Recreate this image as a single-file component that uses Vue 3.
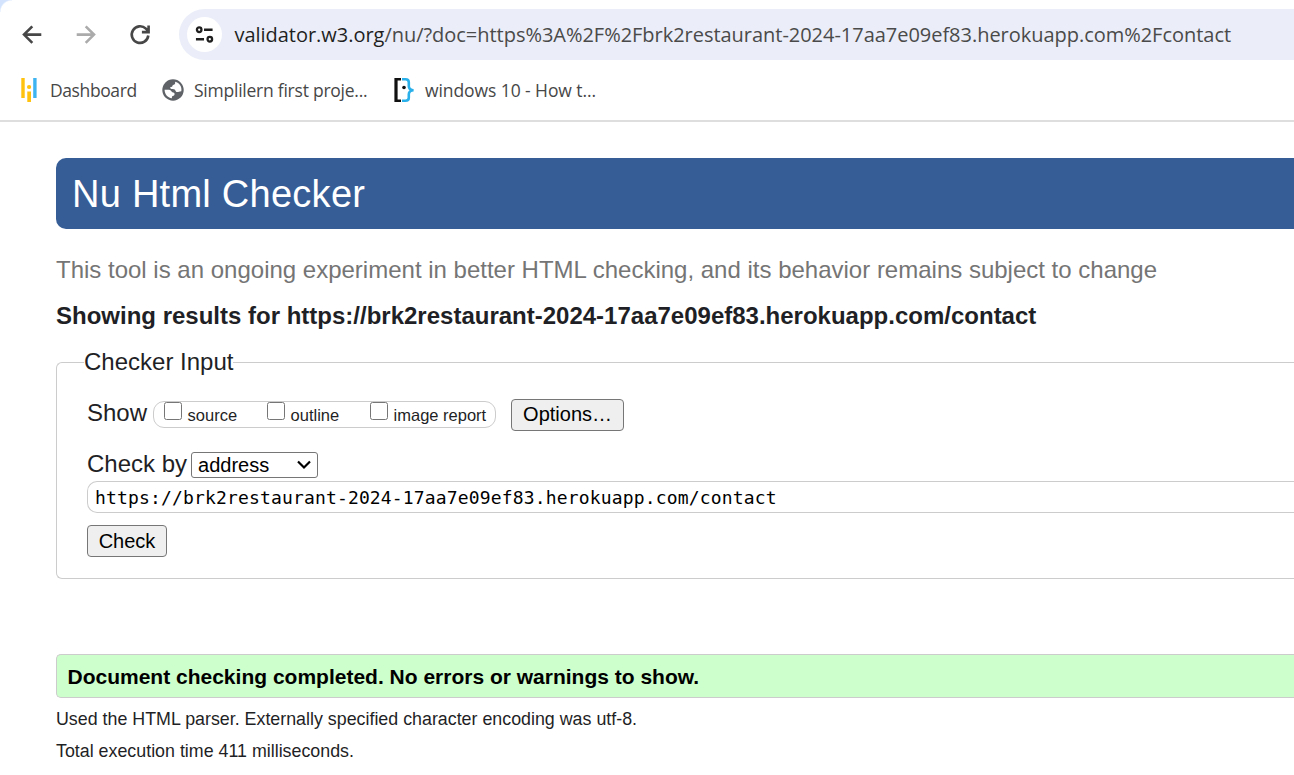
<script setup>
const options = ['source', 'outline', 'image report']
</script>

<template>
  <div class="window">
    <header class="chrome">
      <div class="toolbar">
        <svg class="nav" viewBox="0 0 24 24"><path d="M21.300 11.600H4.300M12.300 3.300 4 11.600l8.300 8.300" /></svg>
        <svg class="nav forward" viewBox="0 0 24 24"><path d="M2.700 11.600h17M11.700 3.300l8.300 8.300-8.300 8.300" /></svg>
        <svg class="nav reload" viewBox="0 0 24 24"><path d="M20.300 12.500a8.300 8.300 0 1 1-2.400-6.800l2.300 2.400M20.600 2.400v6.700h-6.700" /></svg>
        <div class="omnibox">
          <span class="site-info">
            <svg viewBox="0 0 20 20"><circle cx="4.4" cy="5" r="2.4" /><path d="M9.5 5h9M1 15h8.5" /><circle cx="15.6" cy="15" r="2.4" /></svg>
          </span>
          <span class="url"><b>validator.w3.org</b>/nu/?doc=https%3A%2F%2Fbrk2restaurant-2024-17aa7e09ef83.herokuapp.com%2Fcontact</span>
        </div>
      </div>
      <nav class="bookmarks">
        <a class="mark m1"><svg viewBox="0 0 18 24" width="18" height="24"><path fill="#ffc20e" d="M1.300 0h3.400v20H1.300zM7.300 13.500h3.700V24H7.300z" /><circle cx="9.100" cy="9" r="2.100" fill="#ffc20e" /><path fill="#3eb4f0" d="M13.200 0h3.400v20h-3.400z" /></svg><span>Dashboard</span></a>
        <a class="mark m2"><svg viewBox="0 0 22 22" width="22" height="22"><circle cx="11" cy="11" r="10.7" fill="#5f6368" /><path fill="#fff" d="M13 2.700c.8 1.800-.4 3-2.200 3.300-.3 1.500-1 2.100-2.700 2.300.3 1.500 1 1.700 2.500 1.700 2 0 2.600.7 3 2 .4 1 1 1.100 2 1.100.9 0 1.400-.8 3.700-.800C20.200 7.500 17.500 3.800 13 2.700zM2.600 10.800h4.100c2.300 0 2.500 1.800 3.600 2.500 1.200.7 2.300.2 2.300 1.700 0 1.300-.9 1.700-1.900 2.100-.7.300-.8.900-.8 2.200C5.600 18.700 2.600 15.200 2.600 10.800z" /></svg><span>Simplilern first proje...</span></a>
        <a class="mark m3"><svg viewBox="0 0 20 24" width="20" height="24"><path d="M7 1.200H2v21.600h5" fill="none" stroke="#111" stroke-width="2.400" /><path d="M2 0v24" stroke="#111" stroke-width="3" /><circle cx="10" cy="9.500" r="1.800" fill="#111" /><path d="M8 1.300h3.500q3.300 0 3.300 3v4q0 3.500 4.700 4-4.700.5-4.700 4v3.400q0 3-3.300 3H8" fill="none" stroke="#29b0ea" stroke-width="2.600" /></svg><span>windows 10 - How t...</span></a>
      </nav>
    </header>

    <main>
      <h1>Nu Html Checker</h1>
      <p class="tagline">This tool is an ongoing experiment in better HTML checking, and its behavior remains subject to change</p>
      <h2>Showing results for https://brk2restaurant-2024-17aa7e09ef83.herokuapp.com/contact</h2>

      <fieldset>
        <legend>Checker Input</legend>
        <div class="show">
          <span class="label">Show</span>
          <div class="checks">
            <label v-for="o in options" :key="o"><input type="checkbox" /><span>{{ o }}</span></label>
          </div>
          <button class="opts">Options…</button>
        </div>
        <div class="by">
          <span class="label">Check by</span>
          <div class="select"><span>address</span><svg viewBox="0 0 14 10" width="14" height="10"><path d="M1 1.500l6 6 6-6" /></svg></div>
        </div>
        <div class="field">https://brk2restaurant-2024-17aa7e09ef83.herokuapp.com/contact</div>
        <button class="check">Check</button>
      </fieldset>

      <p class="success">Document checking completed. No errors or warnings to show.</p>
      <p class="detail">Used the HTML parser. Externally specified character encoding was utf-8.</p>
      <p class="detail">Total execution time 411 milliseconds.</p>
    </main>
  </div>
</template>

<style>
body { background: #fff; overflow: hidden; }
</style>

<style scoped>
* { box-sizing: border-box; }
.window { width: 1294px; height: 775px; overflow: hidden; font-family: "Liberation Sans", Arial, sans-serif; color: #1f1f26; }
.chrome { height: 122px; border-bottom: 2px solid #dedede; font-family: "Open Sans", "Segoe UI", sans-serif; padding-top: 9px; background: radial-gradient(circle at 12px 12px, #fff 11px, #d3e3fd 12.5px) 0 0 / 12px 12px no-repeat; }
.toolbar { display: flex; align-items: center; height: 51px; padding-left: 20px; }
.nav { width: 24px; height: 24px; fill: none; stroke: #474747; stroke-width: 2.6; margin-right: 30px; flex: none; }
.forward { stroke: #ababab; }
.reload { margin-right: 27px; }
.omnibox { flex: 1; height: 51px; display: flex; align-items: center; background: #ebeef8; border-radius: 26px 0 0 26px; padding-left: 8px; }
.site-info { width: 35px; height: 35px; border-radius: 50%; background: #fff; display: grid; place-items: center; margin-right: 12.5px; flex: none; }
.site-info svg { width: 19px; height: 19px; fill: none; stroke: #1f1f1f; stroke-width: 2.4; }
.url { font-size: 20px; letter-spacing: -0.03px; white-space: nowrap; color: #4a4a4a; }
.url b { font-weight: 400; color: #1f1f1f; }
.bookmarks { display: flex; height: 60px; align-items: center; padding-left: 20px; font-size: 17.5px; color: #474747; }
.mark { display: flex; align-items: center; white-space: nowrap; }
.mark svg { flex: none; }
.mark span { padding-bottom: 1px; }
.m1 { gap: 12px; width: 142px; letter-spacing: -0.4px; }
.m2 { gap: 10px; width: 232px; letter-spacing: -0.24px; }
.m3 { gap: 11px; letter-spacing: -0.08px; }
main { padding: 36px 0 0 56px; }
h1, h2, p { margin: 0; white-space: nowrap; }
h1 { height: 71px; background: #365d96; color: #fff; border-radius: 10px 0 0 10px; padding-left: 16px; font-size: 38px; letter-spacing: 0.26px; font-weight: 400; line-height: 72px; }
.tagline { margin-top: 24px; height: 34px; line-height: 34px; font-size: 24px; color: #757575; }
h2 { margin-top: 12px; height: 34px; line-height: 34px; font-size: 24px; }
fieldset { margin: 14px 0 0; height: 232px; border: 1px solid #ccc; border-right: 0; border-radius: 6px 0 0 6px; padding: 0 0 0 30px; min-width: 0; }
legend { height: 30px; line-height: 30px; font-size: 24px; padding: 0; margin-left: -3px; }
.show { display: flex; align-items: center; height: 32px; margin-top: 22px; }
.label { font-size: 24px; }
.show .label { padding-bottom: 4px; }
.by .label { padding-bottom: 1px; }
.checks { display: flex; height: 27px; width: 343px; margin: 0 15px 1px 6px; border: 1px solid #ccc; border-radius: 11px; font-size: 16.5px; line-height: 26px; }
.checks label { display: flex; width: 103px; flex: none; white-space: nowrap; }
.checks input { width: 18px; height: 18px; margin: 0 5.5px 0 10px; flex: none; }
button { height: 32px; border: 1px solid #767676; border-radius: 4px; background: #efefef; color: #000; font: 20px "Liberation Sans", Arial, sans-serif; padding: 0; }
.opts { width: 113px; padding: 0 0 2px; }
.by { display: flex; align-items: center; height: 27px; margin-top: 20px; }
.select { display: flex; align-items: center; justify-content: space-between; width: 127px; height: 26px; border: 1px solid #767676; border-radius: 3px; margin-left: 4px; padding: 0 6px; font-size: 20px; line-height: 24px; color: #000; }
.select span { padding-top: 1px; }
.select path { fill: none; stroke: #000; stroke-width: 2.2; }
.field { height: 32px; margin-top: 3px; border: 1px solid #ccc; border-right: 0; border-radius: 10px 0 0 10px; padding-left: 7px; font: 18px/32px "DejaVu Sans Mono", monospace; letter-spacing: 0.158px; color: #000; }
.check { width: 80px; margin-top: 12px; display: block; }
.success { margin-top: 75px; height: 44px; line-height: 43px; border: 1px solid #ccc; border-right: 0; background: #cfc; border-radius: 5px 0 0 5px; padding-left: 10.5px; font-size: 21px; font-weight: 700; color: #000; }
.detail { height: 32px; line-height: 32px; font-size: 17.83px; }
.success + .detail { margin-top: 5px; }
</style>
